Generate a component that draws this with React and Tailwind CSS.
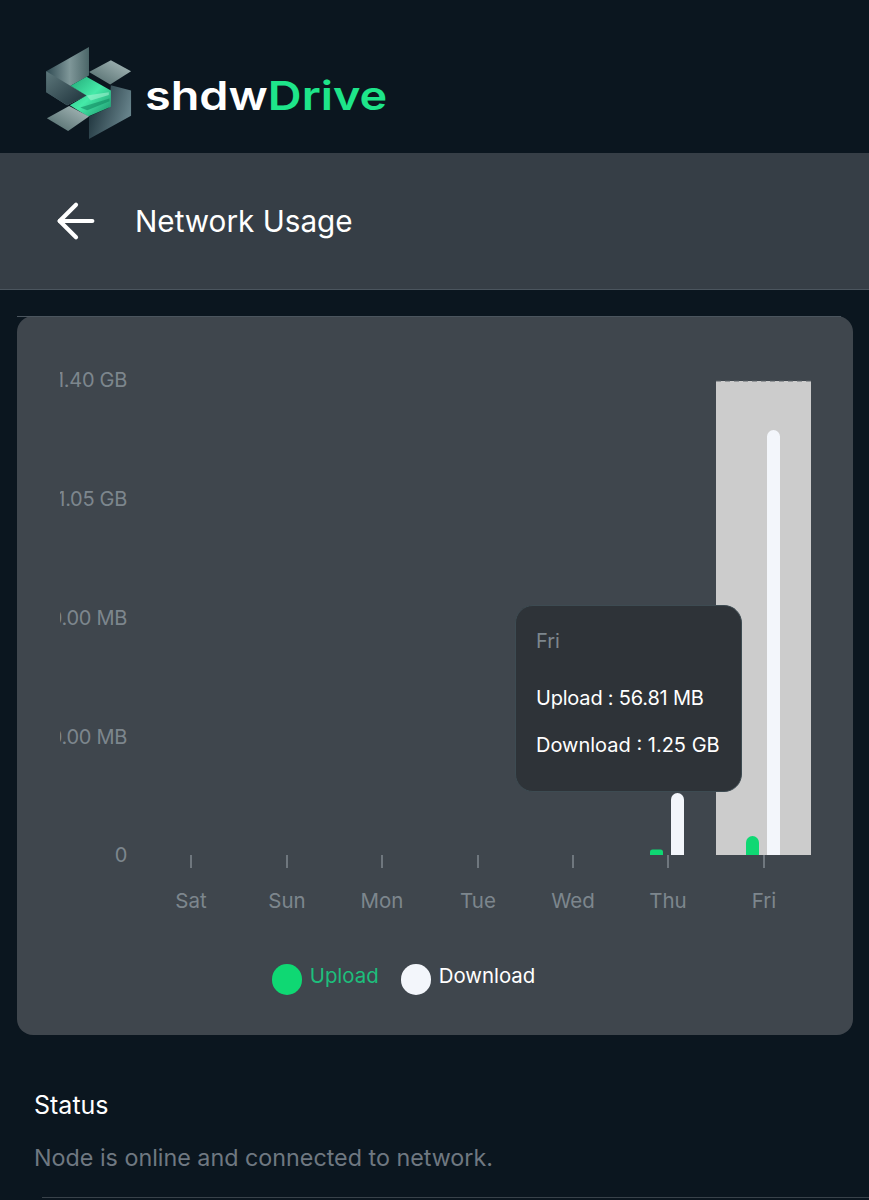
import React from 'react';
import { ArrowLeft } from 'lucide-react';

const yLabels = [
  { text: '1.40 GB', y: 387 },
  { text: '1.05 GB', y: 506 },
  { text: '700.00 MB', y: 625 },
  { text: '350.00 MB', y: 744 },
  { text: '0', y: 862 },
];

const days = [
  { name: 'Sat', x: 191 },
  { name: 'Sun', x: 287 },
  { name: 'Mon', x: 382 },
  { name: 'Tue', x: 478 },
  { name: 'Wed', x: 573 },
  { name: 'Thu', x: 668 },
  { name: 'Fri', x: 764 },
];

const Logo = () => (
  <svg width="115" height="120" viewBox="0 0 330 345" className="shrink-0">
    <defs>
      <linearGradient id="steelA" x1="0" y1="0" x2="1" y2="0">
        <stop offset="0" stopColor="#2f4a52" />
        <stop offset="0.55" stopColor="#7f9799" />
        <stop offset="1" stopColor="#4b6668" />
      </linearGradient>
      <linearGradient id="steelB" x1="0" y1="0" x2="1" y2="1">
        <stop offset="0" stopColor="#5d777b" />
        <stop offset="1" stopColor="#1c3039" />
      </linearGradient>
      <linearGradient id="steelC" x1="0" y1="1" x2="1" y2="0">
        <stop offset="0" stopColor="#4a6566" />
        <stop offset="1" stopColor="#aebfbf" />
      </linearGradient>
      <linearGradient id="steelD" x1="0" y1="0" x2="1" y2="0.4">
        <stop offset="0" stopColor="#12262f" />
        <stop offset="1" stopColor="#66828a" />
      </linearGradient>
      <linearGradient id="glow" x1="0" y1="0" x2="1" y2="1">
        <stop offset="0" stopColor="#23a878" />
        <stop offset="0.5" stopColor="#45eaa8" />
        <stop offset="1" stopColor="#1a8f69" />
      </linearGradient>
    </defs>
    {/* back panels */}
    <polygon points="238,150 296,165 296,238 175,305 175,240 232,215" fill="url(#steelD)" />
    <polygon points="52,110 112,76 175,40 175,122 122,152 168,180 112,208 52,170" fill="url(#steelA)" />
    <polygon points="52,110 168,180 112,208 52,170" fill="url(#steelB)" />
    <polygon points="175,112 238,78 296,110 236,148" fill="url(#steelC)" />
    {/* green core */}
    <polygon points="122,152 168,126 238,165 238,212 172,240 120,208 168,180" fill="url(#glow)" />
    <polygon points="168,180 232,170 232,178 180,194" fill="#a8f5d6" opacity="0.55" />
    <polygon points="150,214 234,188 234,196 170,222" fill="#128a63" opacity="0.6" />
    <polygon points="54,245 118,210 175,240 115,282" fill="url(#steelC)" />
  </svg>
);

const Chart = () => (
  <svg width="836" height="560" viewBox="17 360 836 560" className="block">
    <defs>
      <clipPath id="yClip">
        <rect x="60" y="360" width="80" height="520" />
      </clipPath>
    </defs>
    <rect x="716" y="381" width="95" height="474" fill="#cccccc" />
    <line x1="716" y1="381" x2="811" y2="381" stroke="#5a6066" strokeWidth="1" strokeDasharray="5 4" />
    <g clipPath="url(#yClip)" fontFamily="Inter, sans-serif" fontSize="20" letterSpacing="-0.3" fill="#7d868d" textAnchor="end">
      {yLabels.map((l) => (
        <text key={l.y} x="127" y={l.y}>{l.text}</text>
      ))}
    </g>
    {days.map((d) => (
      <g key={d.name}>
        <line x1={d.x} y1="855" x2={d.x} y2="868" stroke="#6f777e" strokeWidth="2" />
        <text x={d.x} y="908" fontFamily="Inter, sans-serif" fontSize="20.500" fill="#7d868d" textAnchor="middle">{d.name}</text>
      </g>
    ))}
    <path d="M650 855v-3a2.500 2.500 0 0 1 2.500-2.500h8a2.500 2.500 0 0 1 2.500 2.500v3z" fill="#0fd873" />
    <path d="M671 855v-55.500a6.500 6.500 0 0 1 13 0v55.500z" fill="#f3f6fb" />
    <path d="M746 855v-12.500a6.500 6.500 0 0 1 13 0v12.500z" fill="#0fd873" />
    <path d="M767 855v-418.500a6.500 6.500 0 0 1 13 0v418.500z" fill="#f3f6fb" />
  </svg>
);

const App = () => {
  return (
    <div className="h-[1200px] overflow-hidden bg-[#0b161f] font-['Inter',sans-serif]">
      {/* Logo bar */}
      <header className="h-[153px] flex items-start pl-[28px] pt-[33px] gap-[2px]">
        <Logo />
        <div className="mt-[43px] text-[40px] font-semibold leading-none text-white origin-left scale-x-[1.17]">
          shdw<span className="text-[#1ee58a]">Drive</span>
        </div>
      </header>

      {/* Title bar */}
      <div className="h-[137px] flex items-center bg-[#363e46] border-b border-[#4b555e] pl-[48px] gap-[31px]">
        <ArrowLeft size={56} strokeWidth={1.8} className="text-white" />
        <h1 className="text-[29.700px] leading-[40px] pb-[1px] text-white">Network Usage</h1>
      </div>

      {/* Chart card */}
      <div className="mt-[26px] ml-[17px] mr-[16px] h-[719px] rounded-[16px] bg-[#3f464d] relative pt-[44px]">
        <div className="absolute top-0 left-0 right-[12px] h-px bg-[#4b555e]" />
        <Chart />
        <div className="absolute left-[498px] top-[289px] w-[227px] h-[187px] rounded-[18px] bg-[#2e3338] border border-[#3d4b52] pl-[20px] pt-[21px]">
          <div className="text-[20px] leading-[28px] text-[#7d868d]">Fri</div>
          <div className="mt-[29px] text-[20px] leading-[28px] text-white tracking-[-0.2px]">Upload : 56.81 MB</div>
          <div className="mt-[19px] text-[20px] leading-[28px] text-white">Download : 1.25 GB</div>
        </div>
        <div className="flex justify-center items-center pr-[63px] mt-[41px] text-[20.400px]">
          <span className="w-[30px] h-[31px] rounded-full bg-[#0fd873]" />
          <span className="ml-[8px] pb-[6px] text-[#1dbf7c]">Upload</span>
          <span className="ml-[22px] w-[30px] h-[31px] rounded-full bg-[#f3f6fb]" />
          <span className="ml-[8px] pb-[6px] text-white">Download</span>
        </div>
      </div>

      {/* Status */}
      <section className="mt-[52px] px-[34px]">
        <h2 className="text-[25px] leading-[36px] text-white">Status</h2>
        <p className="mt-[18px] text-[23.300px] leading-[34px] text-[#6f7881]">Node is online and connected to network.</p>
      </section>
      <div className="mt-[22px] ml-[42px] h-px bg-[#39424a]" />
    </div>
  );
};

export default App;
